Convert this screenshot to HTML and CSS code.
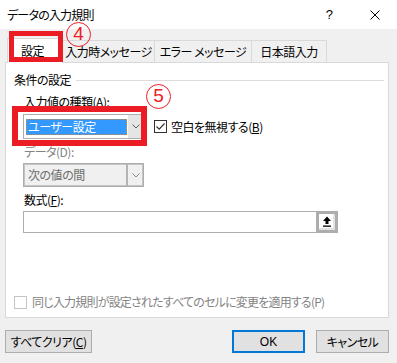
FILE: index.html
```html
<!DOCTYPE html>
<html lang="ja">
<head>
<meta charset="utf-8">
<title>データの入力規則</title>
<link rel="stylesheet" href="styles.css">
</head>
<body>
<div class="dialog">
  <div class="titlebar">
    <span class="title">データの入力規則</span>
    <span class="help">?</span>
    <span class="close"><svg width="10" height="10" viewBox="0 0 10 10"><path d="M0.5 0.5 L9.5 9.5 M9.5 0.5 L0.5 9.5" stroke="#000" stroke-width="1" fill="none"/></svg></span>
  </div>
  <div class="body">
    <div class="tabs">
      <div class="tab tab-active">設定</div>
      <div class="tab tab-msg">入力時メッセージ</div>
      <div class="tab tab-err">エラー メッセージ</div>
      <div class="tab tab-ime">日本語入力</div>
    </div>
    <div class="panel">
      <div class="group-title"><span>条件の設定</span><span class="group-line"></span></div>
      <div class="fields">
        <div class="label l1">入力値の種類(A):</div>
        <div class="row">
          <div class="combo combo-focus">
            <div class="combo-field"><span class="sel">ユーザー設定</span></div>
            <div class="combo-btn"><svg width="8" height="5" viewBox="0 0 8 5"><path d="M0.5 0.5 L4 4 L7.5 0.5" stroke="#606060" stroke-width="1" fill="none"/></svg></div>
          </div>
          <div class="check">
            <span class="box"><svg width="11" height="11" viewBox="0 0 11 11"><path d="M1.5 5.5 L4.2 8.2 L9.5 2.5" stroke="#333" stroke-width="1.2" fill="none"/></svg></span>
            <span>空白を無視する(<u>B</u>)</span>
          </div>
        </div>
        <div class="label disabled l2">データ(D):</div>
        <div class="combo combo-disabled">
          <div class="combo-field">次の値の間</div>
          <div class="combo-btn"><svg width="8" height="5" viewBox="0 0 8 5"><path d="M0.5 0.5 L4 4 L7.5 0.5" stroke="#8a8a8a" stroke-width="1" fill="none"/></svg></div>
        </div>
        <div class="label l3">数式(<u>F</u>):</div>
        <div class="ref">
          <div class="ref-field"></div>
          <div class="ref-btn"><svg width="10" height="11" viewBox="0 0 10 11"><path d="M5 0.5 L9 5 L6.5 5 L6.5 8 L3.5 8 L3.5 5 L1 5 Z" fill="#000"/><rect x="1" y="9.5" width="8" height="1.3" fill="#000"/></svg></div>
        </div>
      </div>
      <div class="apply">
        <span class="box box-disabled"></span>
        <span class="disabled apply-text">同じ入力規則が設定されたすべてのセルに変更を適用する(P)</span>
      </div>
    </div>
    <div class="buttons">
      <button class="btn btn-clear">すべてクリア(<u>C</u>)</button>
      <button class="btn btn-ok">OK</button>
      <button class="btn btn-cancel">キャンセル</button>
    </div>
  </div>
  <div class="mark mark4"></div>
  <div class="circle circle4">4</div>
  <div class="mark mark5"></div>
  <div class="circle circle5">5</div>
</div>
</body>
</html>
```
FILE: styles.css
```css
html, body {
  margin: 0;
  padding: 0;
}
body {
  font-family: "Noto Sans CJK JP", "Noto Sans", sans-serif;
  font-size: 12px;
  font-feature-settings: "palt";
  letter-spacing: -0.5px;
  color: #000;
}
.dialog {
  position: relative;
  width: 397px;
  height: 363px;
  background: #f0f0f0;
  overflow: hidden;
}
.titlebar {
  height: 29px;
  background: #fff;
  display: flex;
  align-items: center;
}
.title {
  flex: 1;
  padding-left: 7px;
  line-height: 16px;
  letter-spacing: -0.8px;
}
.help {
  width: 12px;
  margin-right: 35px;
  text-align: center;
  font-family: "Liberation Sans", sans-serif;
  font-size: 13px;
  line-height: 16px;
}
.close {
  width: 10px;
  height: 10px;
  margin-right: 17px;
  display: flex;
}
.body {
  padding: 9px 8px 0 5px;
}
.tabs {
  display: flex;
  align-items: flex-end;
  height: 25px;
  margin: 0 0 -1px 2px;
  position: relative;
  z-index: 1;
}
.tab {
  box-sizing: border-box;
  height: 22px;
  margin-bottom: 1px;
  margin-left: -1px;
  border: 1px solid #d9d9d9;
  border-bottom: 0;
  background: #f0f0f0;
  display: flex;
  align-items: center;
  justify-content: center;
  line-height: 16px;
  white-space: nowrap;
}
.tab-active {
  height: 25px;
  width: 56px;
  margin: 0;
  background: #fff;
  justify-content: flex-start;
  padding: 0 0 0 13px;
  position: relative;
  z-index: 2;
}
.tab-msg { width: 93px; }
.tab-err { width: 98px; }
.tab-ime { width: 76px; }
.panel {
  box-sizing: border-box;
  height: 256px;
  border: 1px solid #d9d9d9;
  background: #fff;
  padding: 9px 0 0 8px;
}
.group-title {
  display: flex;
  align-items: center;
  line-height: 16px;
  margin-right: 4px;
}
.group-line {
  flex: 1;
  height: 1px;
  background: #dcdcdc;
  margin-left: 5px;
}
.fields {
  padding-left: 9px;
}
.label {
  line-height: 16px;
  padding-left: 1px;
}
.disabled {
  color: #838383;
}
.l1 { margin-top: 6px; }
.row {
  display: flex;
  align-items: center;
  margin-top: 4px;
}
.combo {
  box-sizing: border-box;
  width: 121px;
  height: 24px;
  border: 1px solid #adadad;
  display: flex;
}
.combo-focus {
  height: 25px;
  background: #fff;
}
.combo-field {
  flex: 1;
  display: flex;
  align-items: center;
  line-height: 16px;
}
.combo-focus .combo-field {
  align-items: flex-start;
  padding-top: 4px;
}
.sel {
  flex: 1;
  margin: 0 1px 0 2px;
  height: 16px;
  background: #3399ff;
  color: #fff;
  padding-left: 2px;
  outline: 1px dotted #d08a3c;
  outline-offset: -1px;
}
.combo-btn {
  width: 15px;
  display: flex;
  align-items: center;
  justify-content: center;
}
.combo-focus .combo-btn {
  background: #e5e5e5;
}
.combo-disabled {
  margin-top: 3px;
  background: #f0f0f0;
  color: #6d6d6d;
  box-shadow: inset 0 0 0 1px #c4c4c4;
}
.combo-disabled .combo-field {
  padding-left: 4px;
}
.combo-disabled .combo-btn {
  border-left: 2px solid #b4b4b4;
}
.check {
  display: flex;
  align-items: center;
  margin-left: 10px;
  line-height: 16px;
}
.box {
  box-sizing: border-box;
  width: 13px;
  height: 13px;
  border: 1px solid #333;
  background: #fff;
  display: flex;
  margin-right: 4px;
}
.l2 { margin-top: 5px; }
.l3 { margin-top: 5px; }
.ref {
  display: flex;
  height: 22px;
  margin-top: 3px;
  width: 315px;
}
.ref-field {
  flex: 1;
  box-sizing: border-box;
  border: 1px solid #adadad;
  border-right: 0;
  background: #fff;
}
.ref-btn {
  box-sizing: border-box;
  width: 22px;
  height: 22px;
  border: 3px solid #adadad;
  background: #fff;
  box-shadow: inset -2px -2px 0 #e3e3e3;
  display: flex;
  align-items: center;
  justify-content: center;
  padding: 0 1px 1px 0;
}
.apply {
  display: flex;
  align-items: center;
  margin-top: 61px;
  line-height: 16px;
}
.apply-text {
  letter-spacing: -0.8px;
}
.box-disabled {
  border-color: #c4c4c4;
  margin-right: 5px;
}
.buttons {
  display: flex;
  margin-top: 12px;
}
.btn {
  box-sizing: border-box;
  height: 23px;
  border: 1px solid #adadad;
  background: #e1e1e1;
  font: inherit;
  font-feature-settings: "palt";
  letter-spacing: -0.5px;
  color: #000;
  padding: 0;
  line-height: 16px;
}
.btn-clear { width: 87px; }
.btn-ok {
  width: 73px;
  margin-left: auto;
  margin-right: 11px;
  border: 2px solid #0078d7;
  font-family: "Liberation Sans", sans-serif;
  letter-spacing: 0;
}
.btn-cancel { width: 73px; }
.mark {
  position: absolute;
  z-index: 5;
  box-sizing: border-box;
  border: 5px solid #ec1c24;
  pointer-events: none;
}
.mark4 {
  left: 9px;
  top: 31px;
  width: 54px;
  height: 31px;
}
.mark5 {
  left: 12px;
  top: 106px;
  width: 135px;
  height: 40px;
  border-width: 6px;
}
.circle {
  position: absolute;
  z-index: 5;
  box-sizing: border-box;
  width: 25px;
  height: 25px;
  border: 1.5px solid #ee1c25;
  border-radius: 50%;
  color: #ee1c25;
  font-family: "Liberation Sans", sans-serif;
  font-size: 19px;
  letter-spacing: 0;
  line-height: 22px;
  text-align: center;
}
.circle4 {
  left: 66px;
  top: 22px;
}
.circle5 {
  left: 146px;
  top: 84px;
}
```
